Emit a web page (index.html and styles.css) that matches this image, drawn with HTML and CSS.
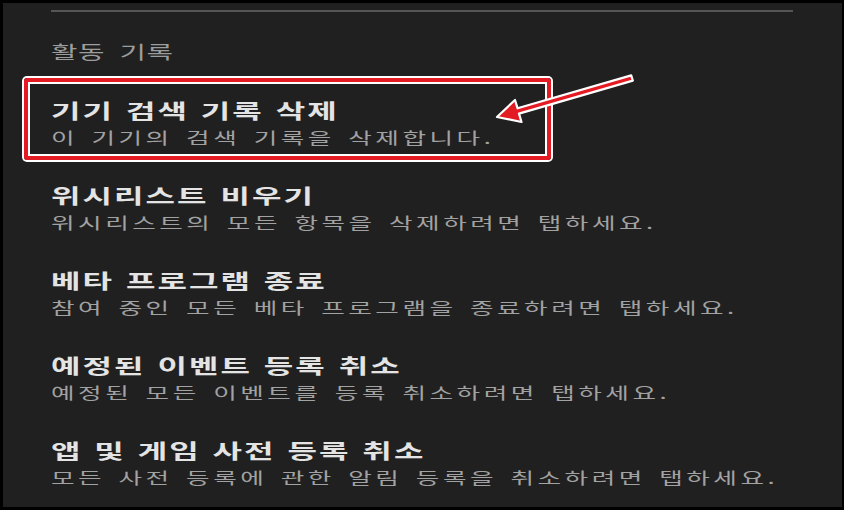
FILE: index.html
```html
<!DOCTYPE html>
<html lang="ko">
<head>
  <meta charset="UTF-8" />
  <meta name="viewport" content="width=device-width, initial-scale=1" />
  <title>활동 기록</title>
  <link rel="stylesheet" href="styles.css">
</head>
<body>

  <div class="screen">
    <div class="panel">
      <hr class="divider">

      <section class="history">
        <h3 class="section-title">활동 기록</h3>

        <ul class="options">
          <li class="option">
            <div class="option-title">기기 검색 기록 삭제</div>
            <div class="option-desc">이 기기의 검색 기록을 삭제합니다.</div>
          </li>
          <li class="option">
            <div class="option-title">위시리스트 비우기</div>
            <div class="option-desc">위시리스트의 모든 항목을 삭제하려면 탭하세요.</div>
          </li>
          <li class="option">
            <div class="option-title">베타 프로그램 종료</div>
            <div class="option-desc">참여 중인 모든 베타 프로그램을 종료하려면 탭하세요.</div>
          </li>
          <li class="option">
            <div class="option-title">예정된 이벤트 등록 취소</div>
            <div class="option-desc">예정된 모든 이벤트를 등록 취소하려면 탭하세요.</div>
          </li>
          <li class="option">
            <div class="option-title">앱 및 게임 사전 등록 취소</div>
            <div class="option-desc">모든 사전 등록에 관한 알림 등록을 취소하려면 탭하세요.</div>
          </li>
        </ul>
      </section>
    </div>

    <!-- 주석: 빨간 강조 상자와 화살표 -->
    <div class="highlight"></div>
    <svg class="arrow" viewBox="0 0 844 510" width="844" height="510">
      <polygon points="497,117 521.5,122 519,113.6 632.8,80.6 631.2,75.4 517.6,108.3 515,100"
        fill="#e31b23" stroke="#fff" stroke-width="2.2" stroke-linejoin="round" />
    </svg>
  </div>

</body>
</html>
```

FILE: styles.css
```css
body {
  margin: 0;
  padding: 0;
  background-color: #000;
  font-family: "Noto Sans CJK KR", "Noto Sans", sans-serif;
}

.screen {
  position: relative;
  width: 844px;
  height: 510px;
  padding: 3px 2px 3px 3px;
  box-sizing: border-box;
  background-color: #000;
  overflow: hidden;
}

.panel {
  height: 100%;
  padding: 7px 49px 0 48px;
  box-sizing: border-box;
  background-color: #202020;
  overflow: hidden;
}

.divider {
  margin: 0;
  height: 2px;
  border: none;
  background-color: #555;
}

/* 원본 화면이 가로로 늘어나 있어서 글자도 가로로 늘림 */
.section-title,
.option-title,
.option-desc {
  width: max-content;
  transform: scaleX(1.6);
  transform-origin: 0 50%;
}

.section-title {
  margin: 27px 0 18px;
  font-size: 18px;
  font-weight: 400;
  line-height: 24px;
  letter-spacing: 0.3px;
  word-spacing: 3.7px;
  color: #9d9d9d;
}

.options {
  list-style: none;
  margin: 0;
  padding: 0;
}

.option {
  padding: 17px 0 16px;
}

.option-title {
  font-size: 20px;
  font-weight: 700;
  line-height: 26px;
  letter-spacing: 1.3px;
  word-spacing: 0.5px;
  color: #e4e4e4;
}

.option-desc {
  font-size: 16px;
  line-height: 26px;
  letter-spacing: 2.2px;
  word-spacing: 1.7px;
  color: #a2a2a2;
}

.highlight {
  position: absolute;
  left: 24px;
  top: 78px;
  width: 527px;
  height: 82px;
  box-sizing: border-box;
  border: 4px solid #e31b23;
  border-radius: 3px;
  box-shadow: 0 0 0 2px #fff, inset 0 0 0 2px #fff;
}

.arrow {
  position: absolute;
  left: 0;
  top: 0;
  pointer-events: none;
}
```
